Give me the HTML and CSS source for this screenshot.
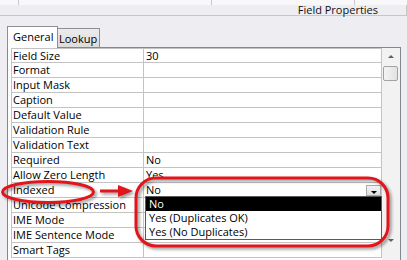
FILE: index.html
```html
<!DOCTYPE html>
<html>
<head>
<meta charset="utf-8">
<link rel="stylesheet" href="styles.css">
</head>
<body>
<div class="top">
  <div class="tc tc1"></div><div class="tc tc2"></div><div class="tc tc3"></div><div class="tc tc4"></div>
</div>
<div class="hdr"><span class="hdr-title">Field Properties</span></div>
<div class="tabs">
  <div class="tab tab-sel">General</div>
  <div class="tab tab-off">Lookup</div>
</div>
<div class="page">
  <div class="grid">
    <div class="cell lbl first">Field Size</div><div class="cell val first">30</div>
    <div class="cell lbl">Format</div><div class="cell val"></div>
    <div class="cell lbl">Input Mask</div><div class="cell val"></div>
    <div class="cell lbl">Caption</div><div class="cell val"></div>
    <div class="cell lbl">Default Value</div><div class="cell val"></div>
    <div class="cell lbl">Validation Rule</div><div class="cell val"></div>
    <div class="cell lbl">Validation Text</div><div class="cell val"></div>
    <div class="cell lbl">Required</div><div class="cell val">No</div>
    <div class="cell lbl">Allow Zero Length</div><div class="cell val">Yes</div>
    <div class="cell lbl">Indexed</div><div class="cell val combo"><span>No</span><span class="dbtn"></span></div>
    <div class="cell lbl">Unicode Compression</div><div class="cell val"></div>
    <div class="cell lbl">IME Mode</div><div class="cell val"></div>
    <div class="cell lbl">IME Sentence Mode</div><div class="cell val"></div>
    <div class="cell lbl">Smart Tags</div><div class="cell val"></div>
  </div>
  <div class="sb">
    <span class="arr-up"></span>
    <span class="thumb"></span>
    <span class="sb-fill"></span>
    <span class="arr-down"></span>
  </div>
</div>
<div class="dd">
  <div class="dd-item dd-sel">No</div>
  <div class="dd-item">Yes (Duplicates OK)</div>
  <div class="dd-item">Yes (No Duplicates)</div>
</div>
<svg class="ann" width="407" height="260" viewBox="0 0 407 260">
  <g class="redmarks" fill="none" stroke="#e3151c" stroke-width="3">
    <ellipse cx="48" cy="192" rx="45.5" ry="10.5"/>
    <line x1="100" y1="191" x2="121" y2="191"/>
    <polygon points="118,185 133,191 118,197" fill="#e3151c" stroke="none"/>
    <rect x="136" y="178" width="252" height="68" rx="20" ry="20"/>
  </g>
</svg>
</body>
</html>
```
FILE: styles.css
```css
html, body {
  margin: 0;
  padding: 0;
}
body {
  width: 407px;
  height: 260px;
  overflow: hidden;
  position: relative;
  background: #eeeef2;
  font-family: "Open Sans", "Noto Sans", sans-serif;
  font-size: 11px;
  color: #000;
}
.top {
  display: flex;
  height: 5px;
  background: #f8f8fa;
}
.tc { height: 5px; border-right: 1px solid #c9c9cc; }
.tc1 { width: 18px; }
.tc2 { width: 192px; }
.tc3 { width: 142px; }
.tc4 { flex: 1; border-right: none; }
.hdr {
  height: 10px;
  border-bottom: 1px solid #c6c6ca;
  border-right: 1px solid #c6c6ca;
  display: flex;
  justify-content: flex-end;
  padding-right: 28px;
}
.hdr-title {
  line-height: 10px;
  color: #111;
  white-space: nowrap;
}
.tabs {
  display: flex;
  align-items: flex-end;
  padding-left: 7px;
  margin-top: 10px;
  height: 21px;
  position: relative;
  z-index: 2;
}
.tab {
  box-sizing: border-box;
  border: 1px solid #8e8f94;
  border-bottom: none;
  white-space: nowrap;
}
.tab-sel {
  width: 51px;
  height: 22px;
  margin-bottom: -1px;
  background: #fff;
  padding-left: 5px;
  line-height: 20px;
}
.tab-off {
  width: 43px;
  height: 19px;
  margin-left: -1px;
  background: linear-gradient(#ececec, #dcdcdc);
  padding-left: 1px;
  line-height: 20px;
}
.page {
  margin-left: 7px;
  width: 394px;
  height: 213px;
  box-sizing: border-box;
  border: 1px solid #828790;
  border-bottom: none;
  background: #fff;
  padding-left: 3px;
  display: flex;
  align-items: flex-start;
}
.grid {
  display: grid;
  grid-template-columns: 132px 238px;
  border-left: 1px solid #c3c3c3;
  border-top: 1px solid #c3c3c3;
}
.cell {
  box-sizing: border-box;
  height: 15px;
  border-right: 1px solid #c3c3c3;
  border-bottom: 1px solid #c3c3c3;
  line-height: 14px;
  white-space: nowrap;
  overflow: hidden;
}
.cell.first { height: 14px; line-height: 13px; }
.lbl { padding-left: 1px; }
.val { padding-left: 2px; }
.combo {
  display: flex;
  justify-content: space-between;
  align-items: flex-start;
  overflow: visible;
}
.dbtn {
  position: relative;
  width: 15px;
  height: 11px;
  margin-top: 2px;
  box-sizing: border-box;
  border: 1px solid #a9a9a9;
  background: linear-gradient(#f4f4f4, #dedede);
}
.dbtn::after {
  content: "";
  position: absolute;
  left: 4px;
  top: 5px;
  border-left: 3px solid transparent;
  border-right: 3px solid transparent;
  border-top: 3px solid #000;
}
.sb {
  width: 18px;
  height: 212px;
  background: #f2f2f2;
  display: flex;
  flex-direction: column;
  align-items: center;
}
.arr-up {
  margin-top: 7px;
  width: 0;
  height: 0;
  border-left: 3px solid transparent;
  border-right: 3px solid transparent;
  border-bottom: 3px solid #606060;
}
.thumb {
  margin-top: 8px;
  width: 15px;
  height: 15px;
  box-sizing: border-box;
  border: 1px solid #a3a3a3;
  border-radius: 2px;
  background: linear-gradient(90deg, #f4f4f4, #e2e2e2);
  margin-left: -2px;
}
.sb-fill { flex: 1; }
.arr-down {
  margin-bottom: 18px;
  width: 0;
  height: 0;
  border-left: 3px solid transparent;
  border-right: 3px solid transparent;
  border-top: 3px solid #606060;
}
.dd {
  position: absolute;
  left: 145px;
  top: 196px;
  width: 237px;
  box-sizing: border-box;
  border: 1px solid #5a5a5a;
  background: #fff;
  z-index: 3;
}
.dd-item {
  height: 14px;
  line-height: 14px;
  padding-left: 3px;
  white-space: nowrap;
}
.dd-sel {
  background: #000;
  color: #fff;
}
.ann {
  position: absolute;
  left: 0;
  top: 0;
  z-index: 5;
  pointer-events: none;
}
.redmarks {
  filter: drop-shadow(2px 2px 1.5px rgba(0, 0, 0, 0.4));
}
```
